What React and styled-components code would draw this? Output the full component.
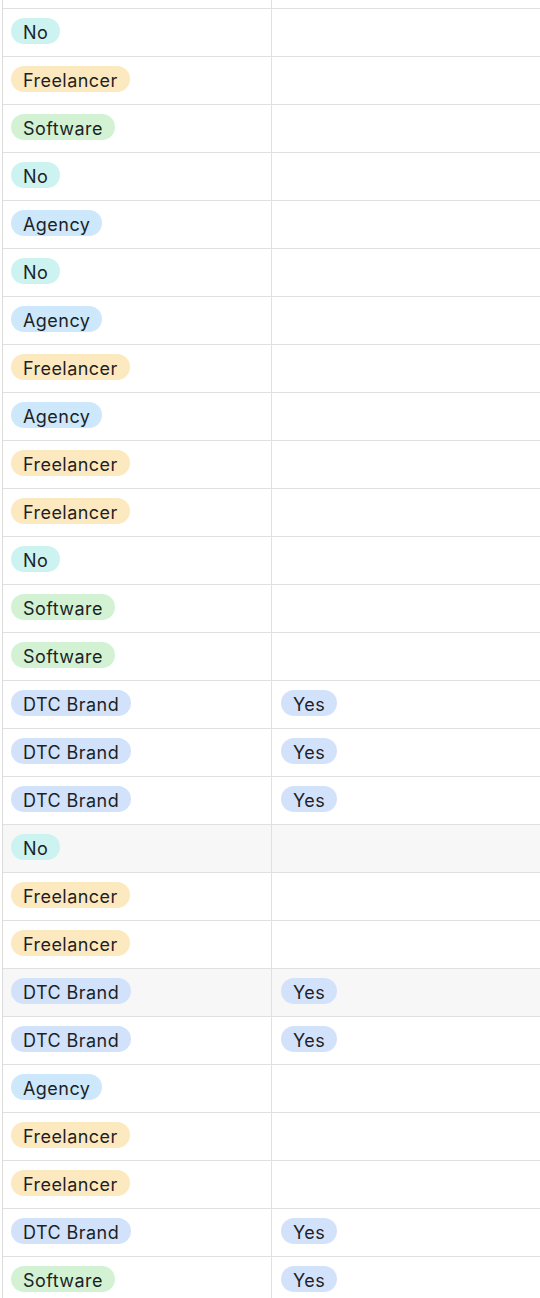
import React from "react";
import styled, { createGlobalStyle } from "styled-components";

const Global = createGlobalStyle`
  html, body { margin: 0; padding: 0; background: #ffffff; overflow: hidden; }
  body { font-family: Inter, "Noto Sans", "Liberation Sans", sans-serif; }
`;

const Page = styled.div`
  padding-left: 2px;
  width: 538px;
  overflow: hidden;
`;

const Table = styled.div`
  margin-top: -39px;
  border-left: 1px solid #dcdcdc;
  display: flex;
  flex-direction: column;
`;

const Row = styled.div`
  display: grid;
  grid-template-columns: 269px 1fr;
  height: 48px;
  box-sizing: border-box;
  border-bottom: 1px solid #e0e0e0;
  background: ${(p) => (p.$hl ? "#f7f7f7" : "#ffffff")};
`;

const Cell = styled.div`
  display: flex;
  align-items: flex-start;
  padding-top: 9px;
  padding-left: ${(p) => (p.$second ? "9px" : "8px")};
  box-sizing: border-box;
  border-right: ${(p) => (p.$second ? "none" : "1px solid #e0e0e0")};
`;

const COLORS = {
  No: "#cdf3f0",
  Freelancer: "#fde9bf",
  Software: "#d3f2d3",
  Agency: "#cde8fb",
  "DTC Brand": "#d3e2fb",
  Yes: "#d3e2fb",
};

const Pill = styled.span`
  display: inline-block;
  box-sizing: border-box;
  height: 26px;
  padding: 4px 12px 0 12px;
  line-height: 22px;
  border-radius: 13px;
  font-size: 18px;
  letter-spacing: 0.45px;
  color: #1d1f25;
  background: ${(p) => p.$bg};
  white-space: nowrap;
`;

const rows = [
  [null, null],
  ["No"],
  ["Freelancer"],
  ["Software"],
  ["No"],
  ["Agency"],
  ["No"],
  ["Agency"],
  ["Freelancer"],
  ["Agency"],
  ["Freelancer"],
  ["Freelancer"],
  ["No"],
  ["Software"],
  ["Software"],
  ["DTC Brand", "Yes"],
  ["DTC Brand", "Yes"],
  ["DTC Brand", "Yes"],
  ["No", null, true],
  ["Freelancer"],
  ["Freelancer"],
  ["DTC Brand", "Yes", true],
  ["DTC Brand", "Yes"],
  ["Agency"],
  ["Freelancer"],
  ["Freelancer"],
  ["DTC Brand", "Yes"],
  ["Software", "Yes"],
];

export default function App() {
  return (
    <Page>
      <Global />
      <Table>
        {rows.map(([a, b, hl], i) => (
          <Row key={i} $hl={hl}>
            <Cell>{a && <Pill $bg={COLORS[a]}>{a}</Pill>}</Cell>
            <Cell $second>{b && <Pill $bg={COLORS[b]}>{b}</Pill>}</Cell>
          </Row>
        ))}
      </Table>
    </Page>
  );
}
